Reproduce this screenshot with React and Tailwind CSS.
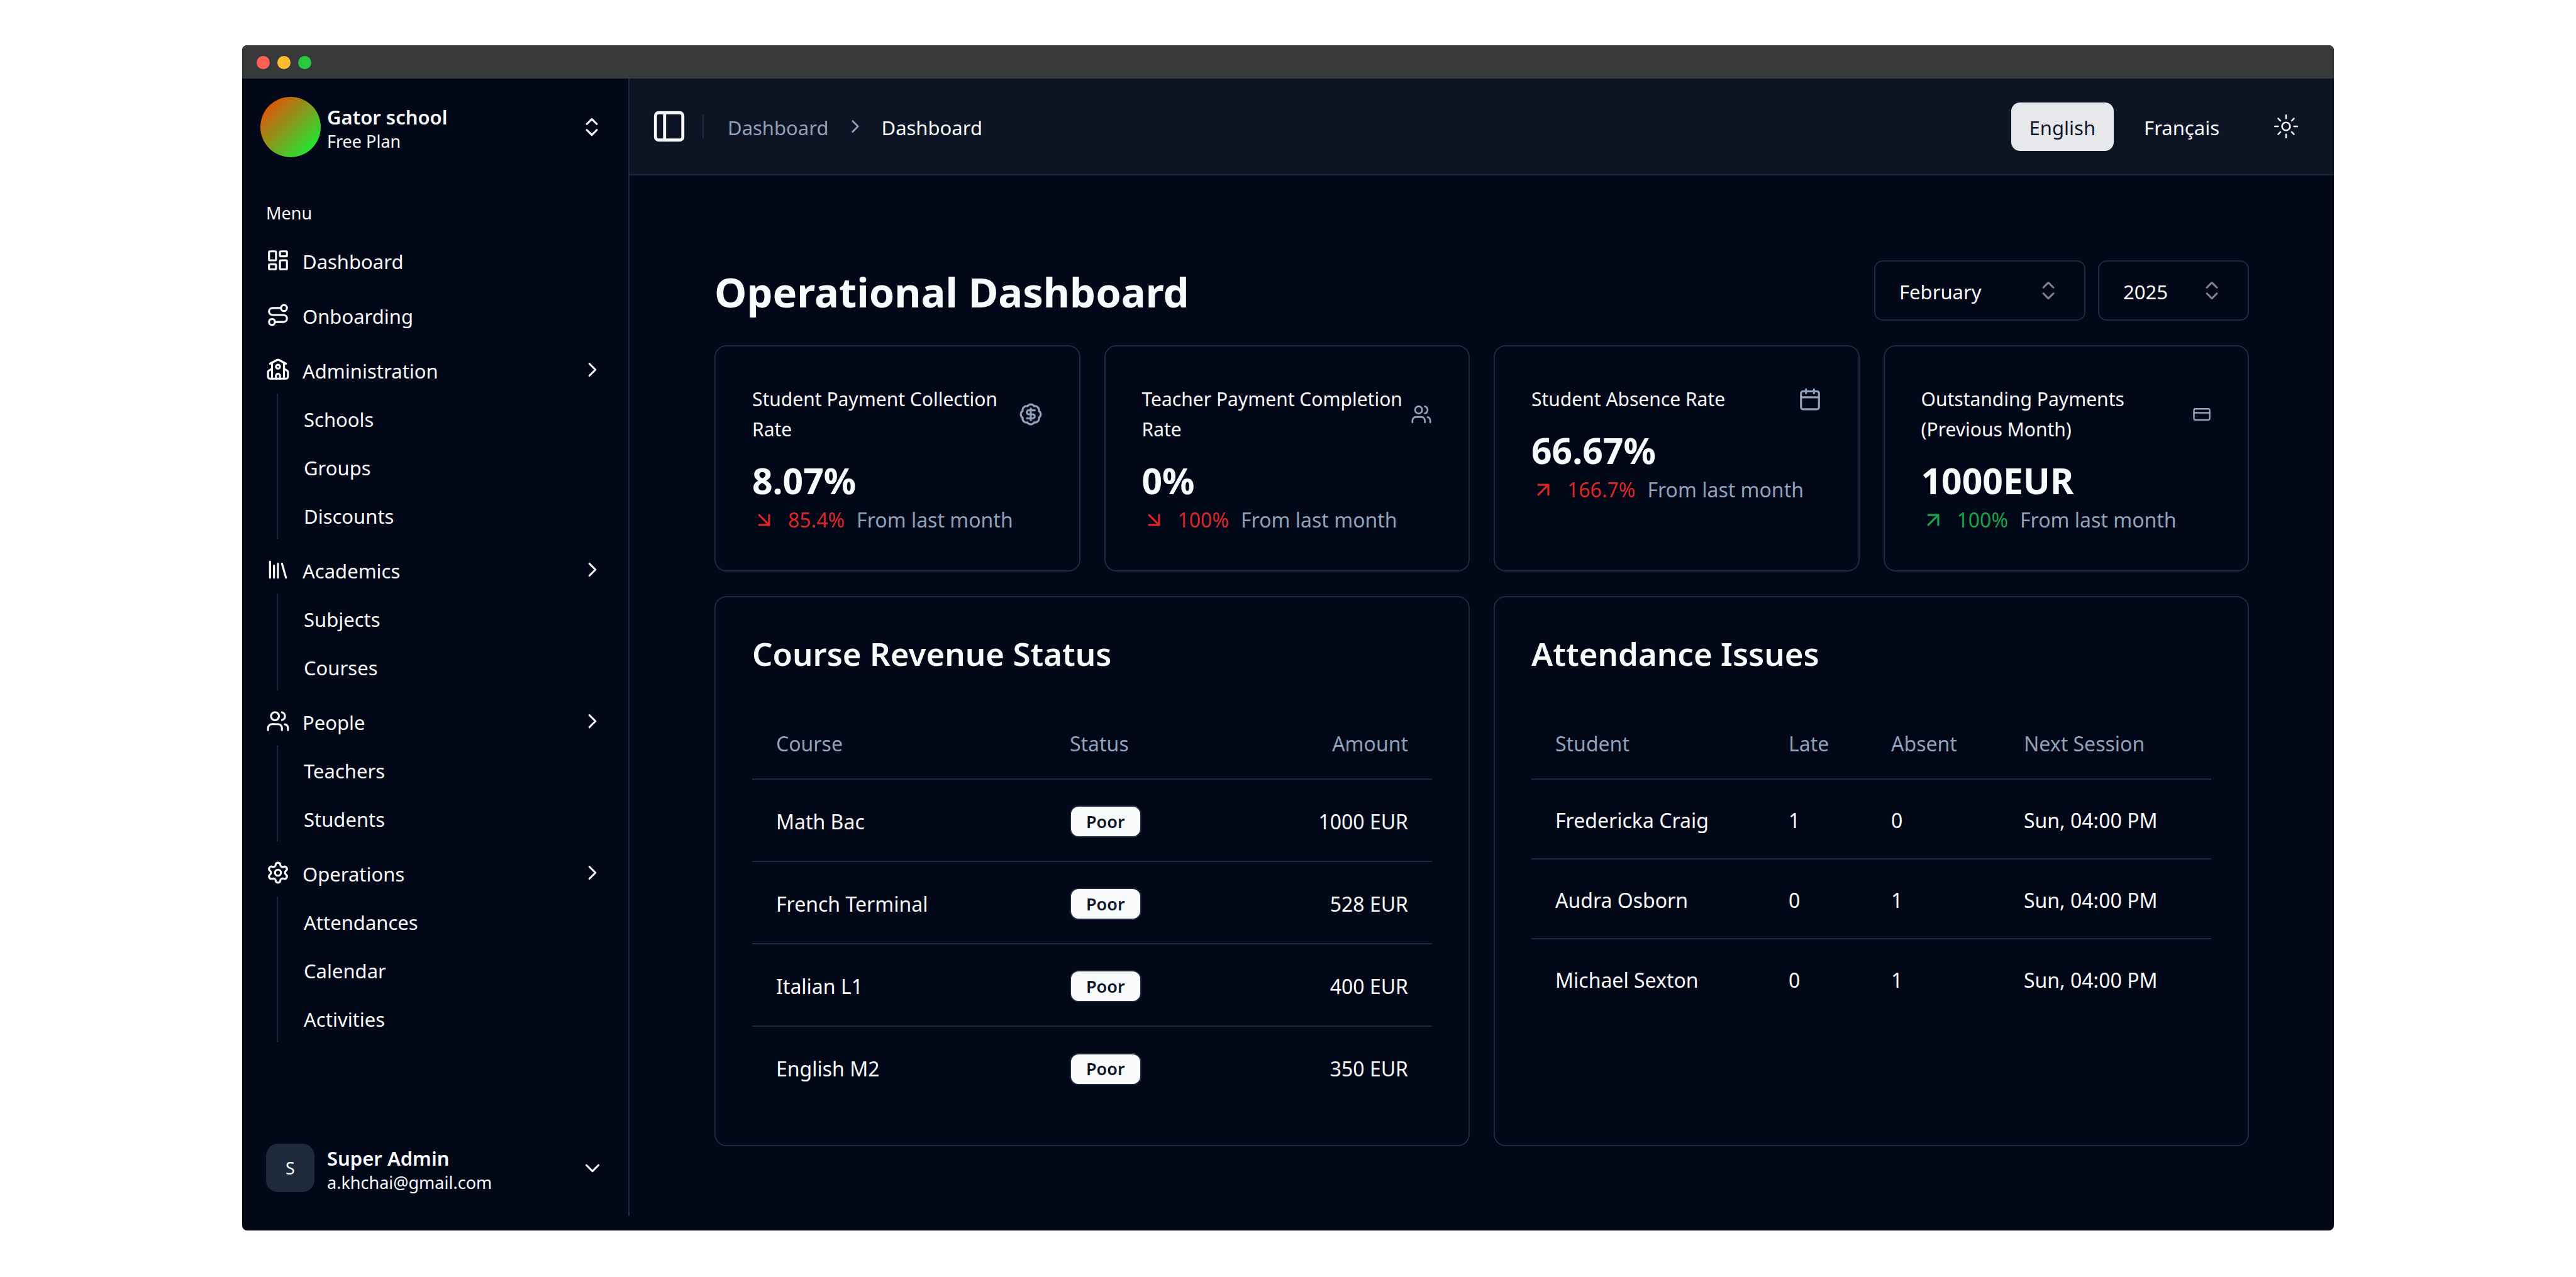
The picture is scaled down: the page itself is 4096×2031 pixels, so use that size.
import {
  ArrowDownRight,
  ArrowUpRight,
  BadgeDollarSign,
  Calendar,
  ChevronDown,
  ChevronRight,
  ChevronsUpDown,
  CreditCard,
  LayoutDashboard,
  Library,
  PanelLeft,
  Route,
  School,
  Settings,
  Users,
} from "lucide-react";
import { RxSun } from "react-icons/rx";

const MENU = [
  { label: "Dashboard", icon: LayoutDashboard },
  { label: "Onboarding", icon: Route },
  { label: "Administration", icon: School, items: ["Schools", "Groups", "Discounts"] },
  { label: "Academics", icon: Library, items: ["Subjects", "Courses"] },
  { label: "People", icon: Users, items: ["Teachers", "Students"] },
  { label: "Operations", icon: Settings, items: ["Attendances", "Calendar", "Activities"] },
];

const STATS = [
  {
    title: "Student Payment Collection Rate",
    icon: BadgeDollarSign,
    iconClass: "size-[38px]",
    value: "8.07%",
    change: "85.4%",
    up: false,
    tone: "text-[#dc2626]",
  },
  {
    title: "Teacher Payment Completion Rate",
    icon: Users,
    iconClass: "size-[34px]",
    value: "0%",
    change: "100%",
    up: false,
    tone: "text-[#dc2626]",
  },
  {
    title: "Student Absence Rate",
    icon: Calendar,
    iconClass: "size-[38px]",
    value: "66.67%",
    change: "166.7%",
    up: true,
    tone: "text-[#dc2626]",
  },
  {
    title: "Outstanding Payments (Previous Month)",
    icon: CreditCard,
    iconClass: "size-[30px]",
    value: "1000EUR",
    change: "100%",
    up: true,
    tone: "text-[#16a34a]",
  },
];

const REVENUE = [
  ["Math Bac", "Poor", "1000 EUR"],
  ["French Terminal", "Poor", "528 EUR"],
  ["Italian L1", "Poor", "400 EUR"],
  ["English M2", "Poor", "350 EUR"],
];

const ATTENDANCE = [
  ["Fredericka Craig", "1", "0", "Sun, 04:00 PM"],
  ["Audra Osborn", "0", "1", "Sun, 04:00 PM"],
  ["Michael Sexton", "0", "1", "Sun, 04:00 PM"],
];

function TitleBar() {
  return (
    <div className="flex h-[53px] items-center gap-3 bg-[#373839] pt-0.5 pl-[23px]">
      <span className="size-[21px] rounded-full bg-[#ff5f57]" />
      <span className="size-[21px] rounded-full bg-[#febc2e]" />
      <span className="size-[21px] rounded-full bg-[#28c840]" />
    </div>
  );
}

function MenuEntry({ label, icon: Icon, items }) {
  return (
    <li>
      <a href="#" className="flex h-[77px] items-center gap-5 px-[19px]">
        <Icon className="size-[38px] shrink-0" />
        <span className="flex-1 pt-1">{label}</span>
        {items && <ChevronRight className="size-[38px]" />}
      </a>
      {items && (
        <ul className="ml-[36px] flex flex-col gap-2.5 border-l-2 border-[#1e293b] py-[5px] pl-[41px]">
          {items.map((item) => (
            <li key={item}>
              <a href="#" className="flex h-[67px] items-center pt-1">
                {item}
              </a>
            </li>
          ))}
        </ul>
      )}
    </li>
  );
}

function Sidebar() {
  return (
    <aside className="flex w-[616px] shrink-0 flex-col border-r-2 border-[#1e293b]">
      <button type="button" className="mx-[29px] mt-[29px] flex h-24 items-center gap-2.5 text-left">
        <span className="size-24 shrink-0 rounded-full bg-[linear-gradient(135deg,#ff3d00,#00ff3c)]" />
        <span className="flex flex-1 flex-col pt-1">
          <span className="leading-[42px] font-semibold">Gator school</span>
          <span className="text-[27px] leading-[36px]">Free Plan</span>
        </span>
        <ChevronsUpDown className="mr-2.5 size-[38px]" />
      </button>

      <nav aria-label="Menu" className="mt-[48px] flex flex-col px-[19px]">
        <h2 className="flex h-[77px] items-center px-[19px] pt-1 text-[27px]">Menu</h2>
        <ul className="flex flex-col gap-2.5">
          {MENU.map((entry) => (
            <MenuEntry key={entry.label} {...entry} />
          ))}
        </ul>
      </nav>

      <button type="button" className="mx-[38px] mt-auto mb-[38px] flex h-[77px] items-center gap-5 text-left">
        <span className="flex size-[77px] shrink-0 items-center justify-center rounded-[19px] bg-[#1e293b] text-[27px]">
          S
        </span>
        <span className="flex flex-1 flex-col pt-1">
          <span className="leading-[42px] font-semibold">Super Admin</span>
          <span className="text-[27px] leading-[36px]">a.khchai@gmail.com</span>
        </span>
        <ChevronDown className="size-[38px]" />
      </button>
    </aside>
  );
}

function Header() {
  return (
    <header className="flex h-[154px] items-center border-b-2 border-[#1e293b] bg-[#0d1423] pr-[57px] pl-[34px]">
      <button type="button" aria-label="Toggle sidebar">
        <PanelLeft className="size-[58px]" />
      </button>
      <span className="mr-[38px] ml-6 h-[38px] w-0.5 bg-[#1e293b]" />
      <nav aria-label="Breadcrumb" className="flex items-center gap-[25px]">
        <a href="#" className="pt-1 text-slate-400">
          Dashboard
        </a>
        <ChevronRight className="size-[34px] text-slate-400" />
        <a href="#" aria-current="page" className="pt-1">
          Dashboard
        </a>
      </nav>
      <div className="ml-auto flex items-center">
        <button type="button" className="h-[77px] rounded-[14px] bg-[#e7e8ec] px-[29px] pt-1 text-[#0f172a]">
          English
        </button>
        <button type="button" className="ml-[19px] h-[77px] px-[29px] pt-1">
          Français
        </button>
        <button type="button" aria-label="Toggle theme" className="ml-[58px]">
          <RxSun className="size-[38px]" />
        </button>
      </div>
    </header>
  );
}

function Picker({ label, value, width }) {
  return (
    <div className={`relative ${width}`}>
      <select
        aria-label={label}
        defaultValue={value}
        className="h-24 w-full appearance-none rounded-[14px] border-2 border-[#1e293b] bg-transparent pt-1 pl-[38px]"
      >
        <option>{value}</option>
      </select>
      <ChevronsUpDown className="pointer-events-none absolute top-[29px] right-[40px] size-[38px] opacity-50" />
    </div>
  );
}

function StatCard({ title, icon: Icon, iconClass, value, change, up, tone }) {
  const Arrow = up ? ArrowUpRight : ArrowDownRight;
  return (
    <section className="rounded-[19px] border-2 border-[#1e293b] px-[58px] pt-[60px] pb-[56px]">
      <div className="flex items-center justify-between pb-[19px]">
        <h3 className="text-[30px] leading-[48px]">{title}</h3>
        <Icon className={`shrink-0 text-slate-400 ${iconClass}`} />
      </div>
      <p className="text-[57px] leading-[77px] font-bold">{value}</p>
      <p className="flex items-center gap-[19px] text-[32px] leading-[48px]">
        <Arrow className={`size-[38px] ${tone}`} />
        <span className={tone}>{change}</span>
        <span className="text-slate-400">From last month</span>
      </p>
    </section>
  );
}

function TableCard({ title, children }) {
  return (
    <section className="rounded-[19px] border-2 border-[#1e293b] px-[58px] pt-[60px] pb-[58px]">
      <h2 className="mb-[56px] text-[51px] leading-[58px] font-semibold">{title}</h2>
      <table className="w-full table-fixed border-collapse">{children}</table>
    </section>
  );
}

function HeadRow({ cells }) {
  return (
    <thead>
      <tr className="h-[115px] border-b-2 border-[#1e293b] text-slate-400">
        {cells.map(([label, cls]) => (
          <th key={label} scope="col" className={`px-[38px] pt-1 font-normal ${cls}`}>
            {label}
          </th>
        ))}
      </tr>
    </thead>
  );
}

function Main() {
  return (
    <main className="flex flex-1 flex-col px-[135px] pt-[135px]">
      <div className="flex h-24 items-center justify-between">
        <h1 className="pt-1 text-[65px] leading-[96px] font-bold">Operational Dashboard</h1>
        <div className="flex gap-5">
          <Picker label="Month" value="February" width="w-[336px]" />
          <Picker label="Year" value="2025" width="w-[240px]" />
        </div>
      </div>

      <div className="mt-[39px] grid grid-cols-4 gap-[38px]">
        {STATS.map((stat) => (
          <StatCard key={stat.title} {...stat} />
        ))}
      </div>

      <div className="mt-[39px] grid grid-cols-2 gap-[38px] text-[32px]">
        <TableCard title="Course Revenue Status">
          <HeadRow
            cells={[
              ["Course", "w-[467px] text-left"],
              ["Status", "text-left"],
              ["Amount", "text-right"],
            ]}
          />
          <tbody>
            {REVENUE.map(([course, status, amount]) => (
              <tr key={course} className="h-[131px] border-b-2 border-[#1e293b] last:border-0">
                <td className="px-[38px] pt-1">{course}</td>
                <td className="px-[38px] pt-1">
                  <span className="inline-flex h-[51px] items-center rounded-[14px] border-2 border-[#1e293b] bg-slate-50 px-6 align-middle text-[27px] font-semibold text-[#0f172a]">
                    {status}
                  </span>
                </td>
                <td className="px-[38px] pt-1 text-right">{amount}</td>
              </tr>
            ))}
          </tbody>
        </TableCard>

        <TableCard title="Attendance Issues">
          <HeadRow
            cells={[
              ["Student", "w-[371px] text-left"],
              ["Late", "w-[163px] text-left"],
              ["Absent", "w-[211px] text-left"],
              ["Next Session", "text-left"],
            ]}
          />
          <tbody>
            {ATTENDANCE.map((row) => (
              <tr key={row[0]} className="h-[127px] border-b-2 border-[#1e293b] last:border-0">
                {row.map((cell, i) => (
                  <td key={i} className="px-[38px] pt-1">
                    {cell}
                  </td>
                ))}
              </tr>
            ))}
          </tbody>
        </TableCard>
      </div>
    </main>
  );
}

export default function App() {
  return (
    <div className="min-h-screen bg-white px-[385px] pt-[72px] pb-[74px] font-['Noto_Sans',sans-serif] text-[31px] leading-[42px] text-slate-50">
      <div className="overflow-hidden rounded-lg bg-[#020817] pb-[23px]">
        <TitleBar />
        <div className="flex min-h-[1809px]">
          <Sidebar />
          <div className="flex min-w-0 flex-1 flex-col">
            <Header />
            <Main />
          </div>
        </div>
      </div>
    </div>
  );
}
